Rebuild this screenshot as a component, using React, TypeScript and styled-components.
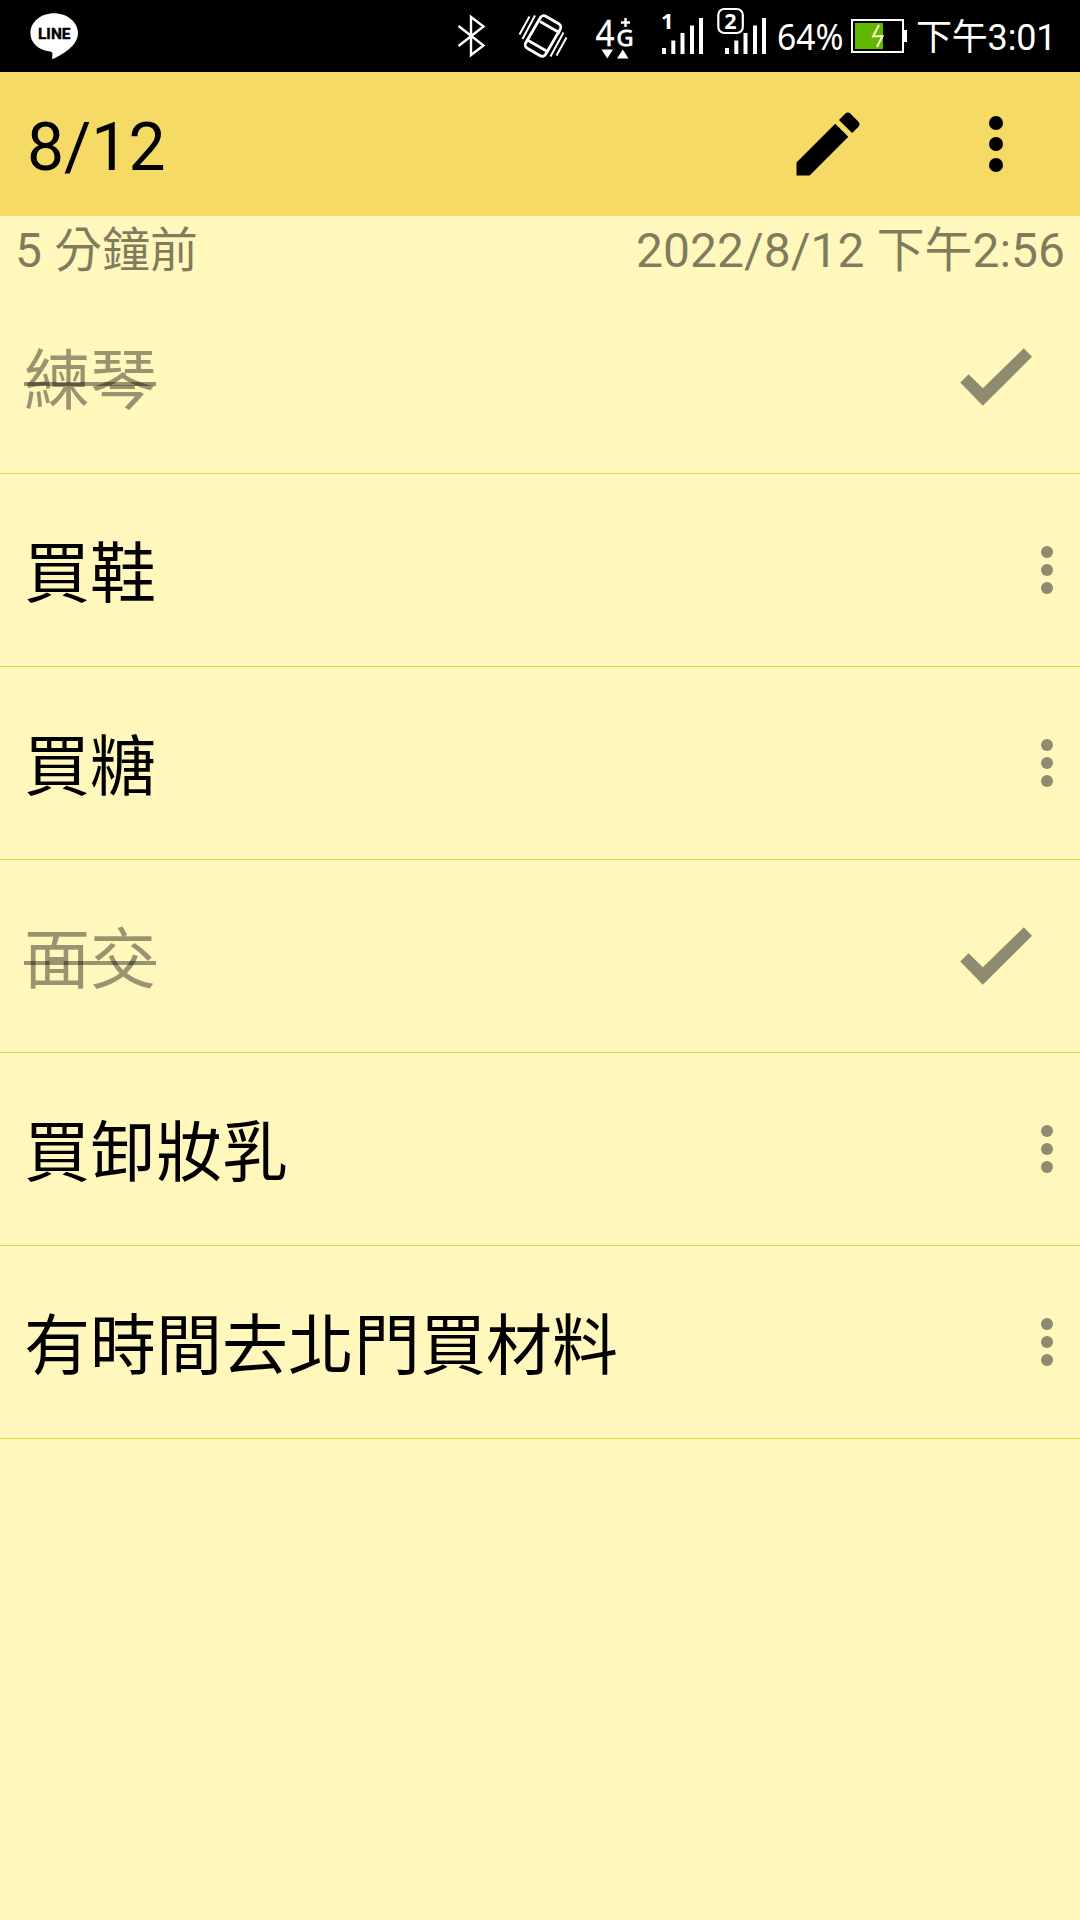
import React from "react";
import styled, { createGlobalStyle } from "styled-components";

const GlobalStyle = createGlobalStyle`
  html, body { margin: 0; padding: 0; background: #fff7bb; }
  * { box-sizing: border-box; }
`;

const Screen = styled.main`
  display: flex;
  flex-direction: column;
  width: 1080px;
  height: 1920px;
  overflow: hidden;
  background: #fff7bb;
  color: #000;
  font-family: Roboto, "Noto Sans CJK TC", sans-serif;
`;

const StatusBar = styled.div`
  display: flex;
  justify-content: space-between;
  height: 72px;
  flex: none;
  padding: 0 24px 0 28px;
  background: #000;
  color: #fff;
`;

const StatusGroup = styled.div`
  display: flex;
  align-items: center;
`;

const StatusIcon = styled.svg`
  display: block;
  flex: none;
  height: 72px;
`;

const Clock = styled.span`
  display: block;
  width: 140px;
  padding-top: 4px;
  font-size: 36px;
  line-height: 44px;
  letter-spacing: -0.2px;
  white-space: nowrap;
`;

const AppBar = styled.header`
  display: flex;
  align-items: center;
  height: 144px;
  flex: none;
  padding: 0 36px 0 27px;
  background: #f5db66;
`;

const Title = styled.h1`
  flex: 1;
  margin: 0;
  padding-top: 7px;
  font-size: 66px;
  font-weight: 400;
  line-height: 78px;
`;

const BarButton = styled.button<{ $width: number }>`
  display: flex;
  align-items: center;
  justify-content: center;
  width: ${(p) => p.$width}px;
  height: 144px;
  padding: 0;
  border: 0;
  background: none;
  color: #000;
`;

const Meta = styled.div`
  display: flex;
  justify-content: space-between;
  height: 65px;
  flex: none;
  padding: 7px 15px 0 15px;
  color: rgba(0, 0, 0, 0.5);
  font-size: 48px;
  line-height: 56px;
  white-space: nowrap;
`;

const List = styled.ul`
  margin: 0;
  padding: 0;
  list-style: none;
`;

const Row = styled.li<{ $done: boolean }>`
  display: flex;
  align-items: center;
  justify-content: space-between;
  height: 193px;
  padding: 0 ${(p) => (p.$done ? 48 : 27)}px 0 24px;
  border-bottom: 1px solid #d9d23a;
`;

const Label = styled.span<{ $done: boolean }>`
  padding-top: 10px;
  font-size: 66px;
  line-height: 78px;
  white-space: nowrap;
  color: ${(p) => (p.$done ? "rgba(0, 0, 0, 0.4)" : "#000")};
  text-decoration: ${(p) => (p.$done ? "line-through" : "none")};
  text-decoration-thickness: 4px;
`;

const Glyph = styled.svg`
  display: block;
  flex: none;
`;

const items = [
  { text: "練琴", done: true },
  { text: "買鞋", done: false },
  { text: "買糖", done: false },
  { text: "面交", done: true },
  { text: "買卸妝乳", done: false },
  { text: "有時間去北門買材料", done: false },
];

const LineIcon = () => (
  <StatusIcon width="54" viewBox="28 0 54 72">
    <path d="M54 13.3c-13 0-23.6 8.7-23.6 19.7 0 10 8 17 19.8 18.6 2 .4 2.500 1.500 2.200 3.400l-.3 3.200c0 .8.500 1 1.300.6C62 54.500 78 46 78 33 78 22 67 13.300 54 13.300z" fill="#fff" />
    <text x="38" y="39" fontFamily="Roboto, sans-serif" fontWeight="700" fontSize="15" textLength="32.500" lengthAdjust="spacingAndGlyphs" stroke="#000" strokeWidth=".4">LINE</text>
  </StatusIcon>
);

const BluetoothIcon = () => (
  <StatusIcon width="60" viewBox="450 0 60 72" fill="none" stroke="#fff" strokeWidth="2.400">
    <path d="M458.500 26l25 19.500L471 55V17l12.500 9.500-25 19.500" />
  </StatusIcon>
);

const VibrateIcon = () => (
  <StatusIcon width="80" viewBox="510 0 80 72" fill="none" stroke="#fff" strokeWidth="2.800">
    <rect x="-11.500" y="-18.500" width="23" height="37" rx="4" transform="translate(543 36) rotate(30)" />
    <path strokeWidth="2.600" d="M540 21.500L560 33M526.500 39.500L546.500 51" />
    <path strokeWidth="2" d="M519.500 34.500l10-18M522.500 39l12.500-23.500M566.500 37.500l-10 18M563.500 32.500l-13 24" />
  </StatusIcon>
);

const NetworkIcon = () => (
  <StatusIcon width="60" viewBox="590 0 60 72" fill="#fff">
    <text x="595.500" y="45.500" fontFamily="Noto Sans, sans-serif" fontSize="35.500" textLength="19" lengthAdjust="spacingAndGlyphs" stroke="#fff" strokeWidth=".3">4</text>
    <text x="616.500" y="45.500" fontFamily="Noto Sans, sans-serif" fontSize="22.500" textLength="17" lengthAdjust="spacingAndGlyphs" stroke="#fff" strokeWidth=".8">G</text>
    <path d="M621 22.500h9M625.500 18v9" stroke="#fff" strokeWidth="2.400" />
    <path d="M601.500 49.500h11.500l-5.700 9zM617 58.500h11.500l-5.700-9z" />
  </StatusIcon>
);

const SignalIcon = ({ sim }: { sim: 1 | 2 }) => (
  <StatusIcon width={sim === 1 ? 63 : 64} viewBox={sim === 1 ? "650 0 63 72" : "650 0 64 72"} fill="#fff">
    <path d="M662 48h4v6h-4zM671.300 40.500h4V54h-4zM680.500 33h4v21h-4zM690 25.500h4V54h-4zM699 18h4v36h-4z" />
    {sim === 1 ? (
      <text x="661" y="29" fontFamily="Noto Sans, sans-serif" fontWeight="700" fontSize="22">1</text>
    ) : (
      <>
        <rect x="655.300" y="9" width="24.500" height="24" rx="6" fill="#000" stroke="#fff" strokeWidth="2.200" />
        <text x="661.300" y="28.500" fontFamily="Noto Sans, sans-serif" fontWeight="700" fontSize="21.500">2</text>
      </>
    )}
  </StatusIcon>
);

const BatteryLevel = () => (
  <StatusIcon width="73" viewBox="777 0 73 72" fill="#fff">
    <text x="777" y="50" fontFamily="Noto Sans, sans-serif" fontSize="36" textLength="66.500" lengthAdjust="spacingAndGlyphs">64%</text>
  </StatusIcon>
);

const BatteryIcon = () => (
  <StatusIcon width="66" viewBox="850 0 66 72">
    <rect x="852" y="20" width="51" height="32" fill="none" stroke="#fff" strokeWidth="2" />
    <path d="M904 30h3v12h-3z" fill="#fff" />
    <path d="M855 23h28v26h-28z" fill="#61b800" />
    <path d="M879 25l-6 11.500 9.500-.5-5.500 11" fill="none" stroke="#fff8c8" strokeWidth="2" />
  </StatusIcon>
);

const Dots = ({ radius, gap, color }: { radius: number; gap: number; color: string }) => {
  const height = 2 * (radius + gap);
  return (
    <Glyph width={radius * 2} height={height} fill={color}>
      {[0, 1, 2].map((i) => (
        <circle key={i} cx={radius} cy={radius + i * gap} r={radius} />
      ))}
    </Glyph>
  );
};

const CheckIcon = () => (
  <Glyph width="72" height="58" viewBox="960 348 72 58" fill="#8f8b6f">
    <path d="M960.300 382.500l8.300-8.200 14.200 14 41-40 8.200 8.400-49.200 49z" />
  </Glyph>
);

export default function App() {
  return (
    <Screen>
      <GlobalStyle />
      <StatusBar>
        <StatusGroup>
          <LineIcon />
        </StatusGroup>
        <StatusGroup>
          <BluetoothIcon />
          <VibrateIcon />
          <NetworkIcon />
          <SignalIcon sim={1} />
          <SignalIcon sim={2} />
          <BatteryLevel />
          <BatteryIcon />
          <Clock>下午3:01</Clock>
        </StatusGroup>
      </StatusBar>
      <AppBar>
        <Title>8/12</Title>
        <BarButton $width={240} aria-label="編輯">
          <Glyph width="84" height="84" viewBox="0 0 24 24" fill="currentColor">
            <path d="M3 17.250V21h3.750L17.810 9.940l-3.750-3.750L3 17.250zM20.710 7.040c.39-.39.39-1.020 0-1.410l-2.340-2.340c-.39-.39-1.020-.39-1.410 0l-1.830 1.830 3.750 3.750 1.830-1.830z" />
          </Glyph>
        </BarButton>
        <BarButton $width={96} aria-label="更多">
          <Dots radius={7} gap={21} color="#000" />
        </BarButton>
      </AppBar>
      <Meta>
        <span>5 分鐘前</span>
        <span>2022/8/12 下午2:56</span>
      </Meta>
      <List>
        {items.map((item) => (
          <Row key={item.text} $done={item.done}>
            <Label $done={item.done}>{item.text}</Label>
            {item.done ? <CheckIcon /> : <Dots radius={6} gap={18} color="#8f8b6f" />}
          </Row>
        ))}
      </List>
    </Screen>
  );
}
